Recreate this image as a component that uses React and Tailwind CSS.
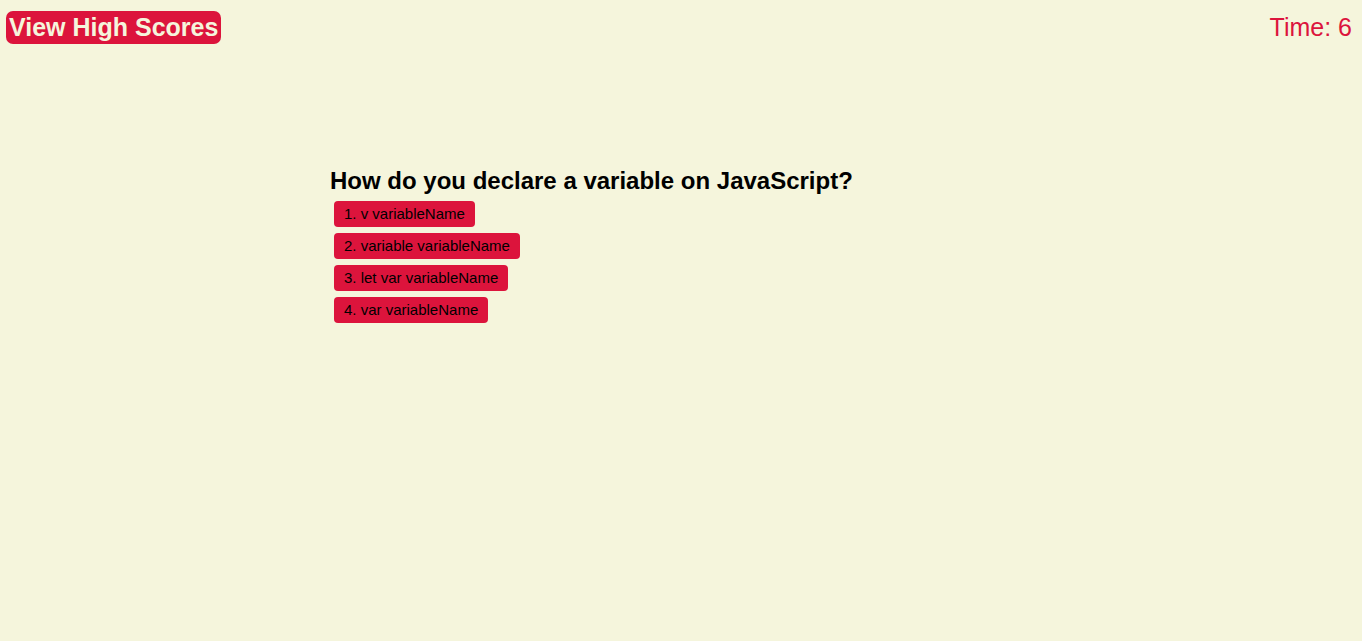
export default function App() {
  const answers = ['1. v variableName', '2. variable variableName', '3. let var variableName', '4. var variableName'];

  return (
    <div className="min-h-[641px] bg-[#f5f5dc] font-['Liberation_Sans',Arial,sans-serif]">
      <header className="flex items-start justify-between pl-[6px] pr-[10px] pt-[11px]">
        <button className="h-[33px] rounded-[7px] bg-[#dc143c] px-[3px] text-[25px] font-bold leading-[33px] text-[#f5f5dc]">
          View High Scores
        </button>
        <div className="pt-[2px] text-[25px] leading-[29px] text-[#dc143c]">Time: 6</div>
      </header>

      <main className="mx-auto mt-[123px] w-[702px]">
        <h2 className="text-[24px] font-bold leading-[28px] text-black">How do you declare a variable on JavaScript?</h2>
        <div className="mt-[6px] flex flex-col items-start gap-[6px] pl-[4px]">
          {answers.map((a) => (
            <button key={a} className="h-[26px] rounded-[4px] bg-[#dc143c] px-[10px] text-[15px] leading-[26px] text-black">
              {a}
            </button>
          ))}
        </div>
      </main>
    </div>
  );
}
